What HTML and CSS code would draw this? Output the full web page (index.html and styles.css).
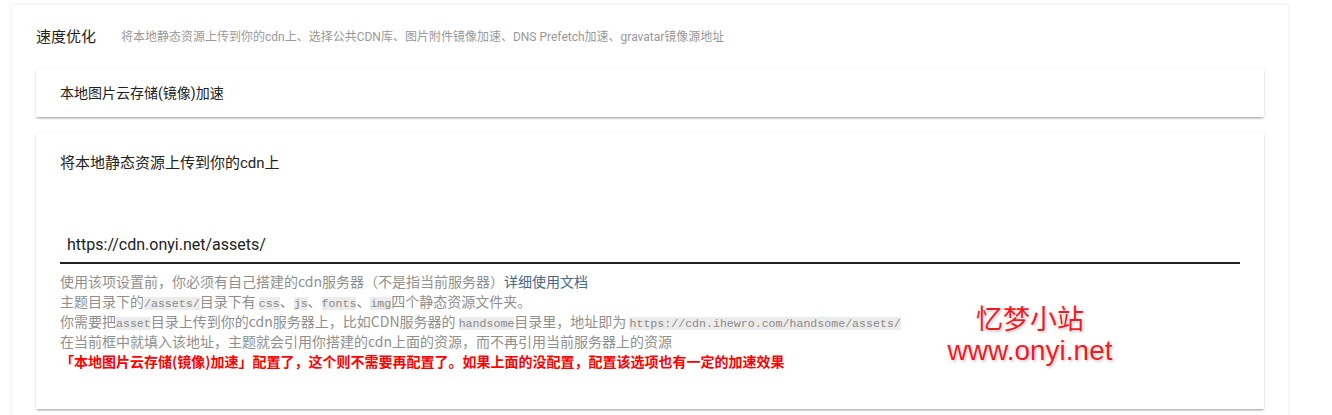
FILE: index.html
```html
<!DOCTYPE html>
<html lang="zh-CN">
<head>
<meta charset="utf-8">
<title>速度优化</title>
<link rel="stylesheet" href="styles.css">
</head>
<body>
<div class="panel">
  <div class="panel-head">
    <span class="panel-title">速度优化</span>
    <span class="panel-desc">将本地静态资源上传到你的cdn上、选择公共CDN库、图片附件镜像加速、DNS Prefetch加速、gravatar镜像源地址</span>
  </div>
  <div class="panel-body">
    <div class="card card-small">
      <div class="card-title">本地图片云存储(镜像)加速</div>
    </div>
    <div class="card card-main">
      <div class="card-title">将本地静态资源上传到你的cdn上</div>
      <div class="field">
        <input class="field-input" type="text" value="https://cdn.onyi.net/assets/">
      </div>
      <div class="help">
        <p>使用该项设置前，你必须有自己搭建的cdn服务器（不是指当前服务器）<a class="help-link" href="#">详细使用文档</a></p>
        <p>主题目录下的<code>/assets/</code>目录下有 <code>css</code>、<code>js</code>、<code>fonts</code>、<code>img</code>四个静态资源文件夹。</p>
        <p>你需要把<code>asset</code>目录上传到你的cdn服务器上，比如CDN服务器的 <code>handsome</code>目录里，地址即为 <code>https://cdn.ihewro.com/handsome/assets/</code></p>
        <p>在当前框中就填入该地址，主题就会引用你搭建的cdn上面的资源，而不再引用当前服务器上的资源</p>
        <p class="help-warn">「本地图片云存储(镜像)加速」配置了，这个则不需要再配置了。如果上面的没配置，配置该选项也有一定的加速效果</p>
      </div>
      <div class="watermark">
        <div class="wm-cn">忆梦小站</div>
        <div class="wm-en">www.onyi.net</div>
      </div>
    </div>
  </div>
</div>
</body>
</html>
```

FILE: styles.css
```css
html, body {
  margin: 0;
  padding: 0;
  background: #fff;
}
body {
  font-family: Roboto, "Noto Sans CJK SC", sans-serif;
  color: #212121;
  overflow: hidden;
}
.panel {
  margin: 5px 0 0 12px;
  width: 1276px;
  background: #fff;
  box-shadow: 0 0 3px rgba(0, 0, 0, 0.12);
}
.panel-head {
  display: flex;
  align-items: center;
  padding: 22px 24px;
  height: 20px;
}
.panel-title {
  font-size: 15px;
  line-height: 20px;
  color: #212121;
  width: 85px;
}
.panel-desc {
  font-size: 12px;
  line-height: 20px;
  color: #999;
}
.panel-body {
  display: flex;
  flex-direction: column;
  gap: 16px;
  padding: 0 24px 24px;
}
.card {
  background: #fff;
  box-shadow: 0 1px 3px rgba(0, 0, 0, 0.14), 0 2px 2px -1px rgba(0, 0, 0, 0.3);
  padding: 0 24px;
}
.card-small {
  padding-top: 14px;
  padding-bottom: 14px;
}
.card-main {
  position: relative;
  padding-top: 20px;
  padding-bottom: 38px;
}
.card-title {
  font-size: 14px;
  line-height: 20px;
  color: #212121;
}
.card-main .card-title {
  font-size: 15px;
}
.field {
  margin-top: 53px;
  border-bottom: 2px solid #212121;
}
.field-input {
  display: block;
  box-sizing: border-box;
  width: 100%;
  height: 36px;
  border: 0;
  outline: none;
  padding: 0 7px;
  margin: 0;
  font-family: Roboto, sans-serif;
  font-size: 16px;
  color: #212121;
  background: transparent;
}
.help {
  margin-top: 7px;
  font-family: "Noto Sans CJK SC", sans-serif;
  font-size: 14px;
  color: #8f8f8f;
}
.help p {
  margin: 0;
  line-height: 20px;
  height: 20px;
  white-space: nowrap;
}
.help-link {
  color: #46698a;
  text-decoration: none;
}
.help code {
  font-family: "Liberation Mono", monospace;
  font-size: 11.6px;
  background: #ececec;
  color: #8a8a8a;
}
.help-warn {
  color: #f00;
  font-weight: bold;
}
.watermark {
  position: absolute;
  left: 906px;
  top: 168px;
  width: 176px;
  text-align: center;
  color: #f01a24;
  text-shadow: 0 0 2px #fff, 0 0 2px #fff, 1px 1px 3px rgba(0, 0, 0, 0.35);
}
.wm-cn {
  font-family: "Noto Sans CJK SC", sans-serif;
  font-size: 27px;
  line-height: 34px;
}
.wm-en {
  font-family: "Liberation Sans", Arial, sans-serif;
  font-size: 28px;
  line-height: 32px;
}
```
